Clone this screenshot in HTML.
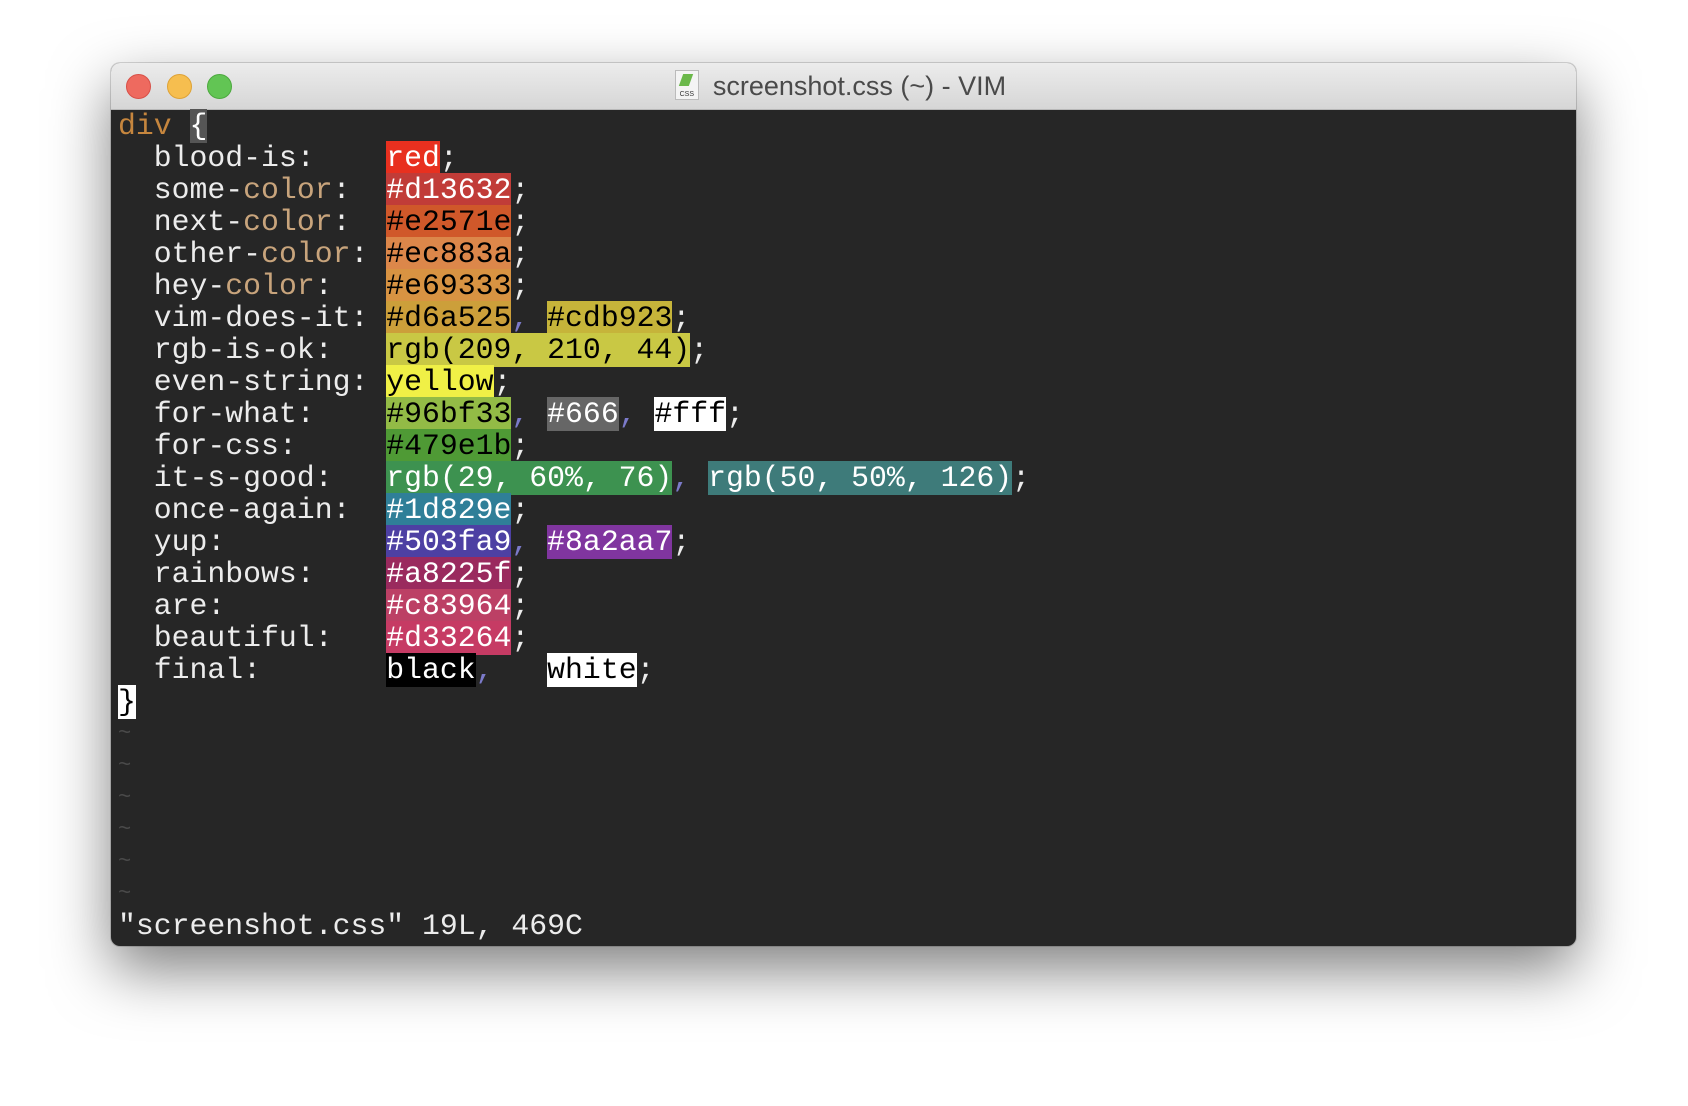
<!DOCTYPE html>
<html><head><meta charset="utf-8"><style>
html,body{margin:0;padding:0;width:1688px;height:1106px;background:#fff;overflow:hidden}
.win{position:absolute;left:111px;top:63px;width:1465px;height:883px;border-radius:9px;background:#262626;box-shadow:0 24px 60px rgba(0,0,0,.5),0 0 0 1px rgba(0,0,0,.15);overflow:hidden}
.tb{position:absolute;left:0;top:0;width:100%;height:46px;background:linear-gradient(#ececec,#d6d6d6);border-bottom:1px solid #b8b8b8}
.dot{position:absolute;top:11px;width:23px;height:23px;border-radius:50%}
.title{position:absolute;left:0;right:0;top:7px;text-align:center;font:27px "Liberation Sans",sans-serif;color:#4a4a4a;padding-right:6px}
.ic{display:inline-block;width:22px;height:28px;background:#f4f4f4;border:1px solid #bbb;vertical-align:-5px;margin-right:14px;position:relative;font-size:7px;color:#333;text-align:center}
pre{position:absolute;left:7px;top:47px;margin:0;font:29.8px/32px "Liberation Mono",monospace;color:#ececec}
.c{color:#c8a47c}.k{color:#c6863e}.m{color:#7b7ac9}.t{color:#4a4a4a;font-size:22px;vertical-align:top;line-height:20px;position:relative;top:6px}
.w{color:#fff}.b{color:#000}
</style></head><body>
<div class="win">
<div class="tb">
<div class="dot" style="left:15px;background:#ee6a5f;border:1px solid #d85048"></div>
<div class="dot" style="left:56px;background:#f6be4f;border:1px solid #dea236"></div>
<div class="dot" style="left:96px;background:#62c554;border:1px solid #4ca93e"></div>
<div class="title"><span class="ic"><span style="position:absolute;left:5px;top:3px;width:10px;height:12px;background:#6bb84a;transform:skew(-20deg)"></span><span style="position:absolute;bottom:1px;left:0;right:0">CSS</span></span>screenshot.css (~) - VIM</div>
</div>
<pre><span class="k">div</span> <span style="background:#555;color:#fff">{</span>
  blood-is:    <span class="w" style="background:#e8301f">red</span>;
  some-<span class="c">color</span>:  <span class="w" style="background:#c13c38">#d13632</span>;
  next-<span class="c">color</span>:  <span class="b" style="background:#d0582a">#e2571e</span>;
  other-<span class="c">color</span>: <span class="b" style="background:#dc874a">#ec883a</span>;
  hey-<span class="c">color</span>:   <span class="b" style="background:#d89342">#e69333</span>;
  vim-does-it: <span class="b" style="background:#cc9f3a">#d6a525</span><span class="m">,</span> <span class="b" style="background:#c6b43a">#cdb923</span>;
  rgb-is-ok:   <span class="b" style="background:#c9c844">rgb(209, 210, 44)</span>;
  even-string: <span class="b" style="background:#f0f046">yellow</span>;
  for-what:    <span class="b" style="background:#93bb46">#96bf33</span><span class="m">,</span> <span class="w" style="background:#666">#666</span><span class="m">,</span> <span class="b" style="background:#fff">#fff</span>;
  for-css:     <span class="b" style="background:#4f9a35">#479e1b</span>;
  it-s-good:   <span class="w" style="background:#3d9250">rgb(29, 60%, 76)</span><span class="m">,</span> <span class="w" style="background:#3e7b7a">rgb(50, 50%, 126)</span>;
  once-again:  <span class="w" style="background:#2f7f98">#1d829e</span>;
  yup:         <span class="w" style="background:#4d40a3">#503fa9</span><span class="m">,</span> <span class="w" style="background:#80359f">#8a2aa7</span>;
  rainbows:    <span class="w" style="background:#9a2a5e">#a8225f</span>;
  are:         <span class="w" style="background:#bc4065">#c83964</span>;
  beautiful:   <span class="w" style="background:#c63b64">#d33264</span>;
  final:       <span class="w" style="background:#000">black</span><span class="m">,</span>   <span class="b" style="background:#fff">white</span>;
<span style="background:#fff;color:#000">}</span>
<span class="t">~</span>
<span class="t">~</span>
<span class="t">~</span>
<span class="t">~</span>
<span class="t">~</span>
<span class="t">~</span>
"screenshot.css" 19L, 469C</pre>
</div>
</body></html>
